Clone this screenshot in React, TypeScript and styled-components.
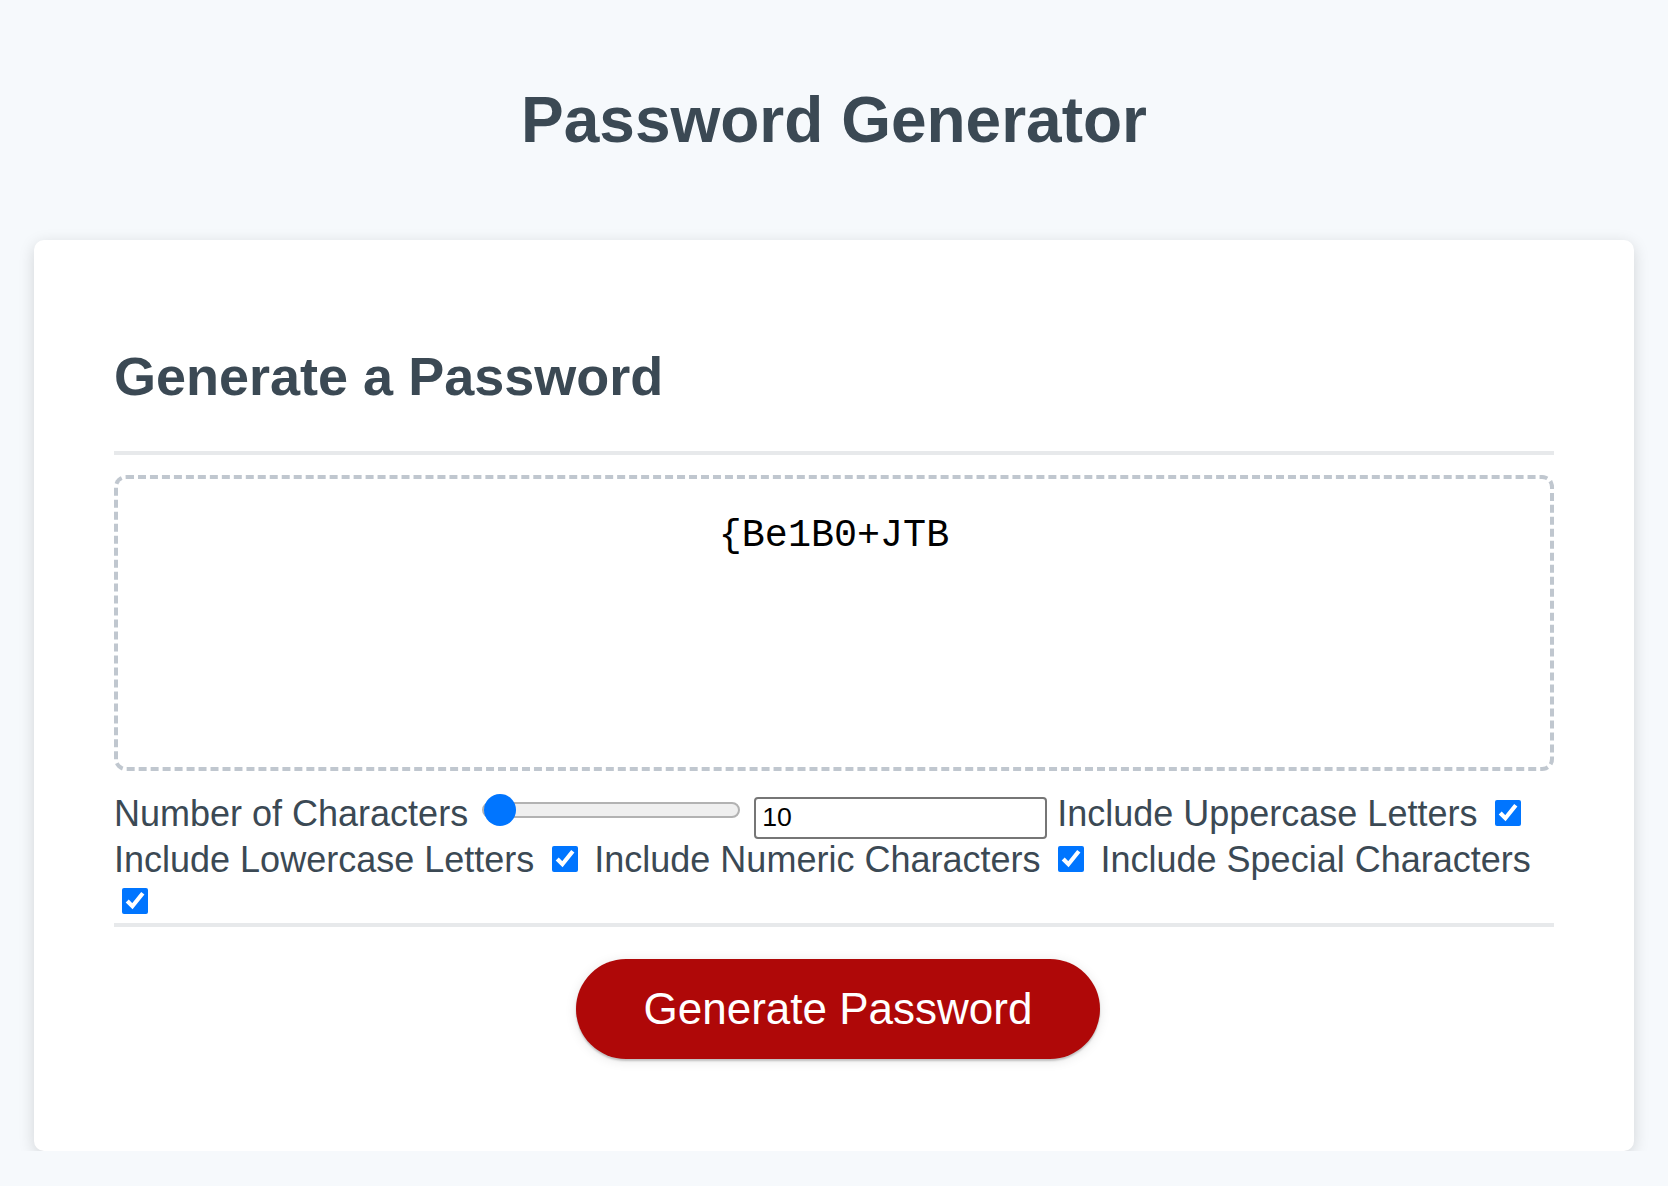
import * as React from 'react';
import styled, {createGlobalStyle} from 'styled-components';

const GlobalStyle = createGlobalStyle`
  html, body {
    margin: 0;
    padding: 0;
  }

  body {
    background-color: #f6f9fc;
    font-family: "Liberation Sans", Arial, Helvetica, sans-serif;
    color: #3b4954;
  }
`;

const App = () => {
    return (
        <Wrapper>
            <GlobalStyle/>
            <Header>
                <Title>Password Generator</Title>
            </Header>
            <Card>
                <CardHeader>
                    <Heading>Generate a Password</Heading>
                </CardHeader>
                <CardBody>
                    <Password
                        readOnly
                        value="{Be1B0+JTB"
                        aria-label="Generated Password"
                    />
                    <Options>
                        <label htmlFor="length">Number of Characters</label>{' '}
                        <Range id="length" type="range" min={10} max={128} defaultValue={10}/>{' '}
                        <NumberInput type="number" min={10} max={128} defaultValue={10}/>{' '}
                        <label htmlFor="upper">Include Uppercase Letters</label>{' '}
                        <Check id="upper" type="checkbox" defaultChecked/>{' '}
                        <label htmlFor="lower">Include Lowercase Letters</label>{' '}
                        <Check id="lower" type="checkbox" defaultChecked/>{' '}
                        <label htmlFor="numeric">Include Numeric Characters</label>{' '}
                        <Check id="numeric" type="checkbox" defaultChecked/>{' '}
                        <label htmlFor="special">Include Special Characters</label>{' '}
                        <Check id="special" type="checkbox" defaultChecked/>
                    </Options>
                </CardBody>
                <CardFooter>
                    <GenerateButton type="button">Generate Password</GenerateButton>
                </CardFooter>
            </Card>
        </Wrapper>
    );
};

const Wrapper = styled.div`
  padding: 0 34px;
`;

const Header = styled.header`
  text-align: center;
  padding: 40px;
`;

const Title = styled.h1`
  margin: 43px 0;
  font-size: 64px;
  line-height: 74px;
  font-weight: 700;
`;

const Card = styled.section`
  background-color: #fff;
  border-radius: 10px;
  box-shadow: rgba(0, 0, 0, 0.15) 0 4px 16px 0;
  padding: 60px 80px;
  font-size: 36px;
`;

const CardHeader = styled.div`
  &::after {
    content: "";
    display: block;
    height: 4px;
    background: #e7e9eb;
  }
`;

const Heading = styled.h2`
  margin: 45px 0 44px;
  font-size: 54px;
  line-height: 62px;
  font-weight: 700;
`;

const CardBody = styled.div`
  min-height: 200px;
`;

const Password = styled.textarea`
  display: block;
  box-sizing: border-box;
  width: 100%;
  height: 296px;
  margin: 20px 0 22px;
  padding: 35px 30px 0;
  border: 4px dashed #c0c7cf;
  border-radius: 12px;
  font-family: "Liberation Mono", "Courier New", monospace;
  font-size: 38.4px;
  color: #000;
  text-align: center;
  resize: none;
  overflow: hidden;
  outline: none;
  background: #fff;
`;

const Options = styled.div`
  line-height: normal;
`;

const Range = styled.input`
  -webkit-appearance: none;
  appearance: none;
  width: 258px;
  height: 32px;
  margin: 0 4px;
  padding: 0;
  background: transparent;
  vertical-align: baseline;

  &::-webkit-slider-runnable-track {
    box-sizing: border-box;
    height: 16px;
    border: 2px solid #b2b2b2;
    border-radius: 8px;
    background: #efefef;
  }

  &::-webkit-slider-thumb {
    -webkit-appearance: none;
    width: 32px;
    height: 32px;
    margin-top: -10px;
    border: none;
    border-radius: 50%;
    background: #0075ff;
  }
`;

const NumberInput = styled.input`
  box-sizing: border-box;
  width: 293px;
  height: 42px;
  margin: 0;
  padding: 2px 6px;
  border: 2px solid #767676;
  border-radius: 4px;
  font-family: "Liberation Sans", Arial, sans-serif;
  font-size: 26.67px;
  color: #000;
  vertical-align: baseline;
  -moz-appearance: textfield;

  &::-webkit-inner-spin-button,
  &::-webkit-outer-spin-button {
    -webkit-appearance: none;
    margin: 0;
  }
`;

const Check = styled.input`
  width: 26px;
  height: 26px;
  margin: 6px 6px 6px 8px;
  accent-color: #0075ff;
  vertical-align: baseline;
`;

const CardFooter = styled.div`
  text-align: center;

  &::before {
    content: "";
    display: block;
    height: 4px;
    background: #e7e9eb;
  }
`;

const GenerateButton = styled.button`
  display: inline-block;
  margin: 32px 32px 32px 40px;
  padding: 28px 68px;
  border: none;
  border-radius: 50px;
  background-color: hsl(360, 91%, 36%);
  box-shadow: rgba(0, 0, 0, 0.1) 0 2px 12px 0, rgba(0, 0, 0, 0.2) 0 2px 2px 0;
  color: #fff;
  font-family: "Liberation Sans", Arial, sans-serif;
  font-size: 44px;
  line-height: 44px;
  text-align: center;
  cursor: pointer;
`;

export default App;
